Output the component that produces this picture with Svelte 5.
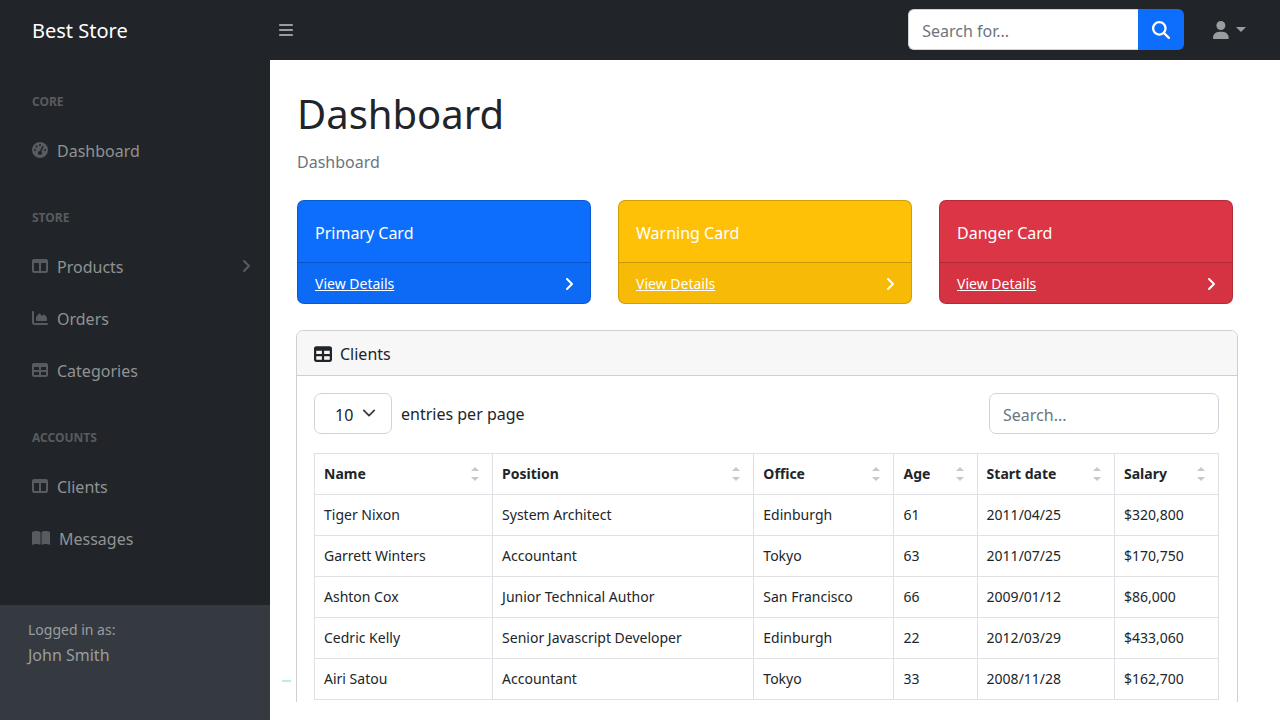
<script>
  const icons = {
    gauge: {
      box: '0 0 512 512',
      d: 'M0 256a256 256 0 1 1 512 0A256 256 0 1 1 0 256zM288 96a32 32 0 1 0-64 0 32 32 0 1 0 64 0zM256 416c35.3 0 64-28.7 64-64c0-17.4-6.9-33.1-18.1-44.6L366 161.7c5.3-12.1-.2-26.3-12.3-31.6s-26.3 .2-31.6 12.3L257.9 288h-1.9c-35.3 0-64 28.7-64 64s28.7 64 64 64zM176 144a32 32 0 1 0-64 0 32 32 0 1 0 64 0zM96 288a32 32 0 1 0 0-64 32 32 0 1 0 0 64zm352-32a32 32 0 1 0-64 0 32 32 0 1 0 64 0z'
    },
    columns: {
      box: '0 0 512 512',
      d: 'M0 96C0 60.7 28.7 32 64 32H448c35.3 0 64 28.7 64 64V416c0 35.3-28.7 64-64 64H64c-35.3 0-64-28.7-64-64V96zm64 64V416H224V160H64zm384 0H288V416H448V160z'
    },
    area: {
      box: '0 0 512 512',
      d: 'M64 64c0-17.7-14.3-32-32-32S0 46.3 0 64V400c0 44.2 35.8 80 80 80H480c17.7 0 32-14.3 32-32s-14.3-32-32-32H80c-8.8 0-16-7.2-16-16V64zm96 288H448c17.7 0 32-14.3 32-32V251.8c0-7.6-2.7-15-7.7-20.8l-65.8-76.8c-12.1-14.2-33.7-15-46.9-1.8l-21 21c-10 10-26.4 9.2-35.4-1.6l-39.2-47c-12.6-15.1-35.7-15.4-48.7-.6L135.9 215c-5.1 5.8-7.9 13.3-7.9 21.1v84c0 17.7 14.3 32 32 32z'
    },
    table: {
      box: '0 0 512 512',
      d: 'M64 256V160H224v96H64zm0 64H224v96H64V320zm224 96V320H448v96H288zM448 256H288V160H448v96zM64 32C28.7 32 0 60.7 0 96V416c0 35.3 28.7 64 64 64H448c35.3 0 64-28.7 64-64V96c0-35.3-28.7-64-64-64H64z'
    },
    book: {
      box: '0 0 576 512',
      d: 'M249.6 471.5c10.8 3.8 22.4-4.1 22.4-15.5V78.6c0-4.2-1.6-8.4-5-11C247.4 52 202.4 32 144 32C93.5 32 46.3 45.3 18.1 56.1C6.8 60.5 0 71.7 0 83.8V454.1c0 11.9 12.8 20.2 24.1 16.5C55.6 460.1 105.5 448 144 448c33.9 0 79 14 105.6 23.5zm76.8 0C353 462 398.1 448 432 448c38.5 0 88.4 12.1 119.9 22.6c11.3 3.8 24.1-4.6 24.1-16.5V83.8c0-12.1-6.8-23.3-18.1-27.6C529.7 45.3 482.5 32 432 32c-58.4 0-103.4 20-123 35.6c-3.3 2.6-5 6.8-5 11V456c0 11.4 11.7 19.3 22.4 15.5z'
    },
    bars: {
      box: '0 0 448 512',
      d: 'M0 96C0 78.3 14.3 64 32 64H416c17.7 0 32 14.3 32 32s-14.3 32-32 32H32C14.3 128 0 113.7 0 96zM0 256c0-17.7 14.3-32 32-32H416c17.7 0 32 14.3 32 32s-14.3 32-32 32H32c-17.7 0-32-14.3-32-32zM448 416c0 17.7-14.3 32-32 32H32c-17.7 0-32-14.3-32-32s14.3-32 32-32H416c17.7 0 32 14.3 32 32z'
    },
    user: {
      box: '0 0 448 512',
      d: 'M224 256A128 128 0 1 0 224 0a128 128 0 1 0 0 256zm-45.7 48C79.8 304 0 383.8 0 482.3C0 498.7 13.3 512 29.7 512H418.3c16.4 0 29.7-13.3 29.7-29.7C448 383.8 368.2 304 269.7 304H178.3z'
    },
    search: {
      box: '0 0 512 512',
      d: 'M416 208c0 45.9-14.9 88.3-40 122.7L502.6 457.4c12.5 12.5 12.5 32.8 0 45.3s-32.8 12.5-45.3 0L330.7 376c-34.4 25.2-76.8 40-122.7 40C93.1 416 0 322.9 0 208S93.1 0 208 0S416 93.1 416 208zM208 352a144 144 0 1 0 0-288 144 144 0 1 0 0 288z'
    },
    angle: {
      box: '0 0 320 512',
      d: 'M278.6 233.4c12.5 12.5 12.5 32.8 0 45.3l-160 160c-12.5 12.5-32.8 12.5-45.3 0s-12.5-32.8 0-45.3L210.7 256 73.4 118.6c-12.5-12.5-12.5-32.8 0-45.3s32.8-12.5 45.3 0l160 160z'
    }
  };

  const menu = [
    { heading: 'Core', links: [{ label: 'Dashboard', icon: 'gauge' }] },
    {
      heading: 'Store',
      links: [
        { label: 'Products', icon: 'columns', arrow: true },
        { label: 'Orders', icon: 'area' },
        { label: 'Categories', icon: 'table' }
      ]
    },
    {
      heading: 'Accounts',
      links: [
        { label: 'Clients', icon: 'columns' },
        { label: 'Messages', icon: 'book' }
      ]
    }
  ];

  const cards = [
    { title: 'Primary Card', variant: 'primary' },
    { title: 'Warning Card', variant: 'warning' },
    { title: 'Danger Card', variant: 'danger' }
  ];

  const columns = [
    { key: 'name', label: 'Name' },
    { key: 'position', label: 'Position' },
    { key: 'office', label: 'Office' },
    { key: 'age', label: 'Age' },
    { key: 'start', label: 'Start date' },
    { key: 'salary', label: 'Salary' }
  ];

  const clients = [
    { name: 'Tiger Nixon', position: 'System Architect', office: 'Edinburgh', age: 61, start: '2011/04/25', salary: '$320,800' },
    { name: 'Garrett Winters', position: 'Accountant', office: 'Tokyo', age: 63, start: '2011/07/25', salary: '$170,750' },
    { name: 'Ashton Cox', position: 'Junior Technical Author', office: 'San Francisco', age: 66, start: '2009/01/12', salary: '$86,000' },
    { name: 'Cedric Kelly', position: 'Senior Javascript Developer', office: 'Edinburgh', age: 22, start: '2012/03/29', salary: '$433,060' },
    { name: 'Airi Satou', position: 'Accountant', office: 'Tokyo', age: 33, start: '2008/11/28', salary: '$162,700' }
  ];

  let query = $state('');
  let sortKey = $state('');
  let sortDir = $state(1);

  let rows = $derived.by(() => {
    const q = query.toLowerCase();
    const found = clients.filter((c) =>
      Object.values(c).some((v) => String(v).toLowerCase().includes(q))
    );
    if (!sortKey) return found;
    return found.sort(
      (a, b) => sortDir * String(a[sortKey]).localeCompare(String(b[sortKey]), undefined, { numeric: true })
    );
  });

  function sortBy(key) {
    sortDir = sortKey === key ? -sortDir : 1;
    sortKey = key;
  }
</script>

{#snippet icon(name)}
  <svg class="icon icon-{name}" viewBox={icons[name].box} aria-hidden="true">
    <path fill-rule="evenodd" d={icons[name].d} />
  </svg>
{/snippet}

<div class="app">
  <header class="topnav">
    <a class="brand" href="#home">Best Store</a>
    <button class="toggle" type="button" aria-label="Toggle sidebar">{@render icon('bars')}</button>
    <form class="top-search" onsubmit={(e) => e.preventDefault()}>
      <input type="text" placeholder="Search for..." aria-label="Search for..." />
      <button type="submit" aria-label="Search">{@render icon('search')}</button>
    </form>
    <button class="account" type="button" aria-label="Account">
      {@render icon('user')}
      <span class="caret"></span>
    </button>
  </header>

  <aside class="sidebar">
    <nav>
      {#each menu as group}
        <div class="heading">{group.heading}</div>
        {#each group.links as link}
          <a class="nav-link" href="#{link.label.toLowerCase()}">
            {@render icon(link.icon)}
            {link.label}
            {#if link.arrow}
              <span class="arrow">{@render icon('angle')}</span>
            {/if}
          </a>
        {/each}
      {/each}
    </nav>
    <div class="sidebar-footer">
      <div class="small">Logged in as:</div>
      John Smith
    </div>
  </aside>

  <main>
    <h1>Dashboard</h1>
    <p class="breadcrumb">Dashboard</p>

    <div class="cards">
      {#each cards as card}
        <section class="card card-{card.variant}">
          <div class="card-title">{card.title}</div>
          <div class="card-footer">
            <a href="#details">View Details</a>
            {@render icon('angle')}
          </div>
        </section>
      {/each}
    </div>

    <section class="panel">
      <h2>{@render icon('table')} Clients</h2>
      <div class="panel-body">
        <div class="controls">
          <label class="per-page">
            <span class="select-wrap">
              <select>
                <option>5</option>
                <option selected>10</option>
                <option>15</option>
                <option>20</option>
                <option>25</option>
              </select>
              <svg viewBox="0 0 16 16" aria-hidden="true"><path d="m2 5 6 6 6-6" /></svg>
            </span>
            entries per page
          </label>
          <input type="search" placeholder="Search..." aria-label="Search..." bind:value={query} />
        </div>

        <table>
          <colgroup>
            {#each columns as col}
              <col class="col-{col.key}" />
            {/each}
          </colgroup>
          <thead>
            <tr>
              {#each columns as col}
                <th scope="col">
                  <button type="button" onclick={() => sortBy(col.key)}>
                    {col.label}
                    <span class="sorter"></span>
                  </button>
                </th>
              {/each}
            </tr>
          </thead>
          <tbody>
            {#each rows as row}
              <tr>
                {#each columns as col}
                  <td>{row[col.key]}</td>
                {/each}
              </tr>
            {/each}
          </tbody>
        </table>
      </div>
    </section>
    <span class="marker"></span>
  </main>
</div>

<style>
  :global(body) {
    background: #fff;
  }

  .app {
    display: grid;
    grid-template: 60px minmax(0, 1fr) / 270px minmax(0, 1fr);
    height: 100vh;
    color: #212529;
    font-family: 'Segoe UI', 'Noto Sans', 'Open Sans', sans-serif;
    font-size: 16px;
    line-height: 26px;
  }

  .app * {
    box-sizing: border-box;
  }

  button,
  input,
  select {
    font: inherit;
    color: inherit;
  }

  button {
    padding: 0;
    border: 0;
    background: none;
    cursor: pointer;
  }

  ::placeholder {
    color: #6c757d;
    opacity: 1;
  }

  .icon {
    height: 16px;
    flex: none;
    fill: currentColor;
  }

  /* Top bar */
  .topnav {
    grid-column: 1 / -1;
    display: flex;
    align-items: center;
    padding: 0 34px 1px 0;
    background: #212529;
  }

  .brand {
    width: 279px;
    padding: 2px 0 0 32px;
    color: #fff;
    font-size: 20px;
    text-decoration: none;
  }

  .toggle {
    display: flex;
    color: #9a9da0;
  }

  .top-search {
    display: flex;
    width: 276px;
    height: 41px;
    margin: 0 29px 0 auto;
  }

  .top-search input {
    flex: 1;
    min-width: 0;
    padding: 2px 13px 0;
    border: 1px solid #ced4da;
    border-right: 0;
    border-radius: 6px 0 0 6px;
    background: #fff;
  }

  .top-search button {
    display: grid;
    place-items: center;
    width: 46px;
    border-radius: 0 6px 6px 0;
    background: #0d6efd;
    color: #fff;
  }

  .icon-search,
  .icon-user {
    height: 18px;
  }

  .account {
    display: flex;
    align-items: center;
    gap: 7px;
    color: #9a9da0;
  }

  .caret {
    border: 5px solid transparent;
    border-top-color: currentColor;
    border-bottom: 0;
  }

  /* Sidebar */
  .sidebar {
    display: flex;
    flex-direction: column;
    background: #212529;
    color: #909294;
  }

  .sidebar nav {
    flex: 1;
  }

  .heading {
    padding: 32px 32px 12px;
    color: #585b5f;
    font-size: 12px;
    font-weight: 700;
    line-height: 20px;
    text-transform: uppercase;
  }

  .nav-link {
    display: flex;
    align-items: center;
    gap: 9px;
    padding: 14px 19px 12px 32px;
    color: inherit;
    text-decoration: none;
  }

  .nav-link .icon {
    margin-bottom: 2px;
    color: #585b5f;
  }

  .arrow {
    display: flex;
    margin-left: auto;
  }

  .sidebar-footer {
    padding: 13px 28px 52px;
    background: #353a40;
    color: #9a9da0;
  }

  .small {
    font-size: 14px;
    line-height: 24px;
  }

  /* Content */
  main {
    position: relative;
    margin-bottom: 18px;
    padding: 27px 42px 0 27px;
    overflow: hidden;
  }

  h1 {
    margin: 0 0 8px;
    font-size: 40px;
    font-weight: 400;
    line-height: 54px;
  }

  .breadcrumb {
    margin: 0 0 25px;
    color: #6c757d;
  }

  .cards {
    display: grid;
    grid-template-columns: repeat(3, 1fr);
    gap: 27px;
    margin: 0 5px 26px 0;
  }

  .card {
    border: 1px solid rgba(0, 0, 0, 0.18);
    border-radius: 7px;
    color: #fff;
    overflow: hidden;
  }

  .card-primary {
    background: #0d6efd;
  }

  .card-warning {
    background: #ffc107;
  }

  .card-danger {
    background: #dc3545;
  }

  .card-title {
    padding: 19px 17px 16px;
  }

  .card-footer {
    display: flex;
    align-items: center;
    justify-content: space-between;
    padding: 9px 16px 7px 17px;
    border-top: 1px solid rgba(0, 0, 0, 0.18);
    background: rgba(0, 0, 0, 0.03);
    font-size: 14px;
    line-height: 24px;
  }

  .card-footer a {
    color: inherit;
  }

  .panel {
    margin-left: -1px;
    border: 1px solid #cfcfcf;
    border-radius: 7px;
  }

  h2 {
    display: flex;
    align-items: center;
    gap: 8px;
    margin: 0;
    padding: 10px 17px 8px;
    border-bottom: 1px solid #cfcfcf;
    border-radius: 6px 6px 0 0;
    background: #f7f7f7;
    font-size: 16px;
    font-weight: 400;
  }

  h2 .icon {
    height: 18px;
  }

  .panel-body {
    padding: 17px 18px 18px 17px;
  }

  .controls {
    display: flex;
    align-items: center;
    justify-content: space-between;
    margin-bottom: 19px;
  }

  .per-page {
    display: flex;
    align-items: center;
    gap: 9px;
  }

  .select-wrap {
    position: relative;
  }

  .select-wrap svg {
    position: absolute;
    top: 13px;
    right: 16px;
    width: 14px;
    fill: none;
    stroke: #343a40;
    stroke-width: 2;
    stroke-linecap: round;
    stroke-linejoin: round;
    pointer-events: none;
  }

  select,
  .controls input {
    display: block;
    height: 41px;
    border: 1px solid #ced4da;
    border-radius: 7px;
    background: #fff;
  }

  select {
    width: 78px;
    padding: 2px 20px 0;
    appearance: none;
  }

  .controls input {
    width: 230px;
    padding: 2px 13px 0;
    appearance: none;
  }

  table {
    width: 100%;
    border-collapse: collapse;
    table-layout: fixed;
    font-size: 14px;
    line-height: 24px;
  }

  .col-name {
    width: 19.7%;
  }

  .col-position {
    width: 28.9%;
  }

  .col-office {
    width: 15.5%;
  }

  .col-age {
    width: 9.2%;
  }

  .col-start {
    width: 15.2%;
  }

  .col-salary {
    width: 11.5%;
  }

  th,
  td {
    padding: 8px 9px;
    border: 1px solid #dee2e6;
    text-align: left;
  }

  th button {
    display: flex;
    align-items: center;
    justify-content: space-between;
    width: 100%;
    padding-right: 4px;
    font-weight: 700;
  }

  .sorter {
    display: grid;
    gap: 6px;
  }

  .sorter::before,
  .sorter::after {
    content: '';
    border: 4px solid transparent;
  }

  .sorter::before {
    border-top: 0;
    border-bottom-color: #c8c8c8;
  }

  .sorter::after {
    border-bottom: 0;
    border-top-color: #c8c8c8;
  }

  .marker {
    position: absolute;
    bottom: 20px;
    left: 12px;
    width: 9px;
    height: 2px;
    background: #b5efe6;
  }
</style>
